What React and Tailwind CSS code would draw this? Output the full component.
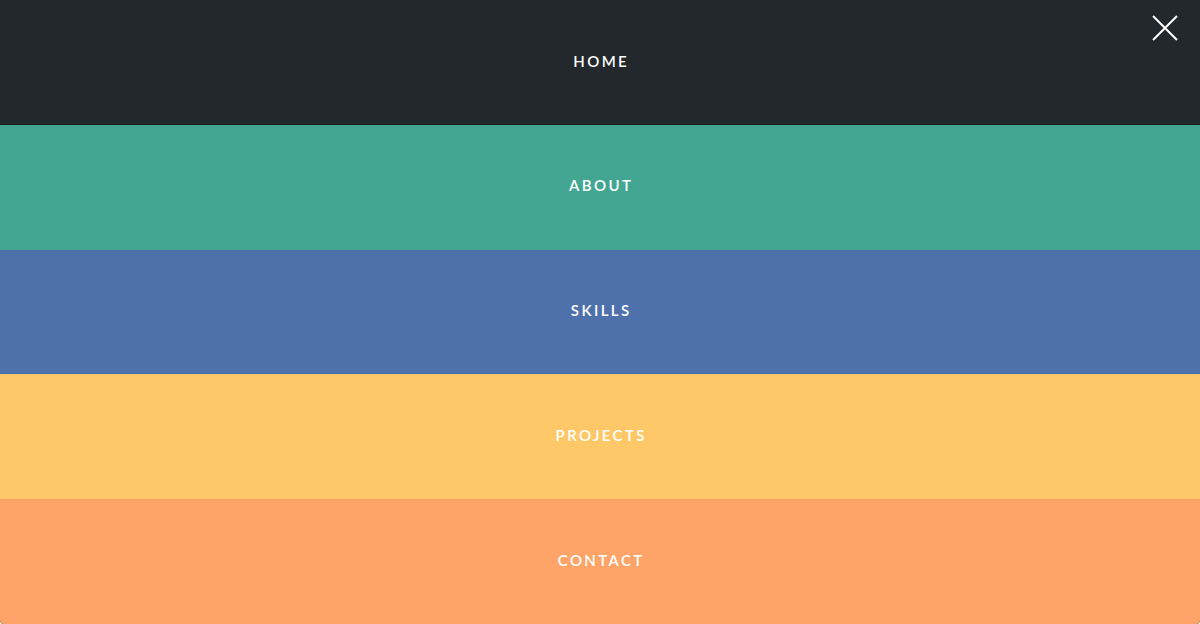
import React from 'react';

const items = [
  { label: 'HOME', bg: 'bg-[#22282c] shadow-[inset_0_-1px_0_#181c1f]' },
  { label: 'ABOUT', bg: 'bg-[#42a692]' },
  { label: 'SKILLS', bg: 'bg-[#4e71ab]' },
  { label: 'PROJECTS', bg: 'bg-[#fec767]' },
  { label: 'CONTACT', bg: 'bg-[#ffa468]' },
];

const App = () => {
  return (
    <div className="relative flex h-[624px] w-full flex-col overflow-hidden rounded-b-[4px] bg-[#22282c] font-['Lato',sans-serif]">
      {items.map((item) => (
        <a
          key={item.label}
          href="#"
          className={`flex flex-1 items-center justify-center pb-[3px] ${item.bg}`}
        >
          <span className="pl-[0.16em] text-[15px] font-semibold tracking-[0.16em] text-white">
            {item.label}
          </span>
        </a>
      ))}

      {/* Close */}
      <button className="absolute right-[22px] top-[15px] h-[26px] w-[26px] text-white">
        <svg viewBox="0 0 26 26" className="h-full w-full" fill="none" stroke="currentColor" strokeWidth="2">
          <path d="M1 1 L25 25 M25 1 L1 25" />
        </svg>
      </button>
    </div>
  );
};

export default App;
